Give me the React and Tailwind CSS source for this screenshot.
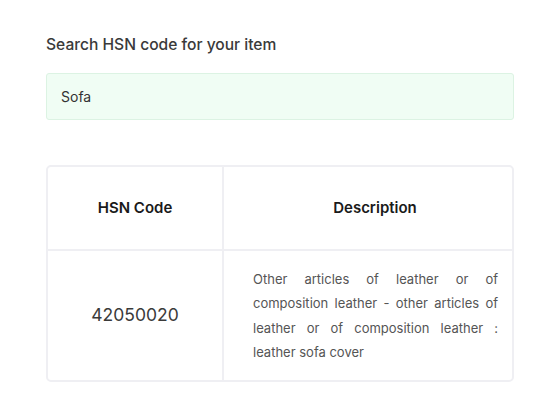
import React from 'react';

export default function App() {
  return (
    <div className="w-[560px] h-[416px] bg-white px-[46px] pt-[35px]" style={{ fontFamily: 'Inter, "Noto Sans", sans-serif' }}>
      <h2 className="text-[15.6px] font-medium text-[#3a3a3a] leading-[20px]">Search HSN code for your item</h2>
      <div className="mt-[18px] h-[47px] rounded-[3px] border border-[#dcf3e3] bg-[#f0fdf4] flex items-center px-[14px]">
        <span className="text-[14px] text-[#333333]">Sofa</span>
      </div>

      <div className="mt-[45px] rounded-[5px] border-2 border-[#efeff3] overflow-hidden">
        <div className="grid grid-cols-[176px_1fr] border-b-2 border-[#efeff3]">
          <div className="h-[82px] flex items-center justify-center border-r-2 border-[#efeff3] text-[15px] font-semibold text-[#1a1a1a]">
            HSN Code
          </div>
          <div className="h-[82px] flex items-center justify-center pl-[14px] text-[15px] font-semibold text-[#1a1a1a]">
            Description
          </div>
        </div>
        <div className="grid grid-cols-[176px_1fr]">
          <div className="h-[129px] flex items-center justify-center border-r-2 border-[#efeff3] text-[17.5px] text-[#3a3a3a]">
            42050020
          </div>
          <div className="h-[129px] flex items-center pl-[29px] pr-[14px]">
            <p className="text-[13px] leading-[24.5px] text-[#555555] text-justify">
              Other articles of leather or of composition leather - other articles of leather or of composition leather : leather sofa cover
            </p>
          </div>
        </div>
      </div>
    </div>
  );
}
